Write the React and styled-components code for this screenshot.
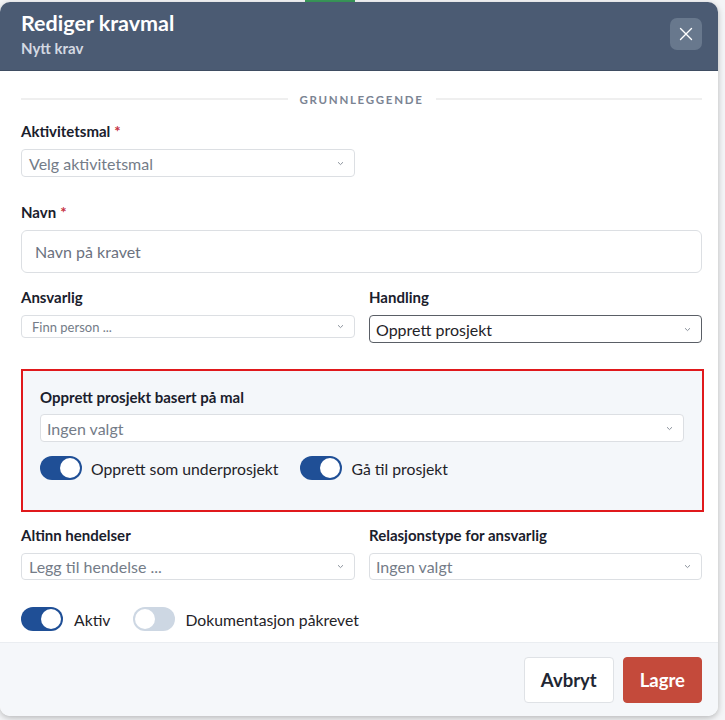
import React from "react";
import styled, { createGlobalStyle } from "styled-components";

const Global = createGlobalStyle`
  html, body { margin: 0; padding: 0; }
  body {
    background: #eef0f3;
    font-family: Lato, "Noto Sans", sans-serif;
    color: #1a202c;
  }
  * { box-sizing: border-box; }
`;

const Page = styled.div`
  width: 725px;
  height: 720px;
  overflow: hidden;
  display: flex;
  flex-direction: column;
  background: #f4f5f7;
`;

const TopStrip = styled.div`
  height: 2px;
  display: flex;
  padding-left: 305px;
`;

const GreenMark = styled.div`
  width: 50px;
  height: 2px;
  background: #3a9a5b;
`;

const Modal = styled.div`
  width: 718px;
  height: 714px;
  background: #fff;
  border-radius: 10px;
  overflow: hidden;
  display: flex;
  flex-direction: column;
  box-shadow: 0 2px 6px rgba(0, 0, 0, 0.25);
`;

const Header = styled.div`
  height: 69px;
  background: #4b5b73;
  display: flex;
  align-items: center;
  justify-content: space-between;
  padding: 0 16px 0 21px;
  border-bottom: 1px solid #3f4d62;
`;

const TitleBlock = styled.div`
  display: flex;
  flex-direction: column;
  gap: 3px;
  margin-top: -3px;
`;

const Title = styled.div`
  color: #fff;
  font-size: 21.5px;
  font-weight: 700;
  line-height: 25px;
`;

const Subtitle = styled.div`
  color: #d3d9e2;
  font-size: 15px;
  font-weight: 700;
  line-height: 19px;
`;

const CloseButton = styled.button`
  width: 32px;
  height: 32px;
  border: none;
  border-radius: 7px;
  background: #68788d;
  display: flex;
  align-items: center;
  justify-content: center;
  padding: 0;
  margin-top: -4px;
`;

const Body = styled.div`
  flex: 1;
  padding: 18px 16px 0 21px;
  display: flex;
  flex-direction: column;
`;

const Divider = styled.div`
  display: flex;
  align-items: center;
  gap: 12px;
  height: 20px;
  margin-bottom: 12px;
  &::before, &::after {
    content: "";
    flex: 1;
    height: 2px;
    background: #efefef;
  }
`;

const DividerText = styled.span`
  font-size: 11.5px;
  font-weight: 700;
  letter-spacing: 1.7px;
  color: #7b8493;
`;

const Group = styled.div`
  display: flex;
  flex-direction: column;
  gap: 8px;
  width: ${(p) => p.$width || "auto"};
  margin-bottom: ${(p) => p.$mb || 0}px;
`;

const Label = styled.div`
  font-size: 15px;
  font-weight: 700;
  line-height: 20px;
  color: #1a202c;
`;

const Req = styled.span`
  color: #c53040;
  margin-left: 4px;
`;

const SelectBox = styled.div`
  height: ${(p) => p.$h || 28}px;
  border: 1px solid ${(p) => (p.$strong ? "#5a5f66" : "#dcdfe3")};
  border-radius: 4px;
  background: #fff;
  display: flex;
  align-items: center;
  justify-content: space-between;
  padding: 0 10px 0 ${(p) => p.$pl || 7}px;
  font-size: ${(p) => p.$fs || 16}px;
  color: ${(p) => (p.$value ? "#1f2328" : "#747c88")};
`;

const TextInput = styled.div`
  height: 43px;
  border: 1px solid #dcdfe3;
  border-radius: 6px;
  display: flex;
  align-items: center;
  padding: 0 13px;
  font-size: 16px;
  color: #6b7280;
`;

const Row = styled.div`
  display: grid;
  grid-template-columns: 334px 333px;
  column-gap: 14px;
  margin-bottom: ${(p) => p.$mb || 0}px;
`;

const Highlight = styled.div`
  border: 2px solid #e0191c;
  background: #f4f7fa;
  padding: 16px 18px 30px 17px;
  display: flex;
  flex-direction: column;
  gap: 7px;
  margin-right: -2px;
  margin-bottom: 13px;
`;

const ToggleRow = styled.div`
  display: flex;
  align-items: center;
  gap: ${(p) => p.$gap || 22}px;
  margin-top: ${(p) => p.$mt || 0}px;
`;

const ToggleItem = styled.label`
  display: flex;
  align-items: center;
  gap: ${(p) => p.$gap || 9}px;
  font-size: 15.75px;
  color: #1f2328;
`;

const Track = styled.span`
  width: 42px;
  height: 24px;
  border-radius: 12px;
  background: ${(p) => (p.$on ? "#1f4f96" : "#cdd7e3")};
  display: flex;
  align-items: center;
  justify-content: ${(p) => (p.$on ? "flex-end" : "flex-start")};
  padding: 2px;
`;

const Knob = styled.span`
  width: 20px;
  height: 20px;
  border-radius: 50%;
  background: #fff;
`;

const Footer = styled.div`
  height: 74px;
  background: #f5f7fa;
  border-top: 1px solid #eaedf1;
  display: flex;
  align-items: center;
  justify-content: flex-end;
  gap: 9px;
  padding: 0 16px 0 0;
`;

const Button = styled.button`
  height: 46px;
  padding: 0 16px;
  border-radius: 4px;
  font-family: inherit;
  font-size: 18.5px;
  font-weight: 700;
  border: 1px solid ${(p) => (p.$primary ? "#c44a3b" : "#dfe2e6")};
  background: ${(p) => (p.$primary ? "#c44a3b" : "#fff")};
  color: ${(p) => (p.$primary ? "#fff" : "#1f2733")};
`;

const Chevron = () => (
  <svg width="7" height="5" viewBox="0 0 7 5" fill="none">
    <path d="M1 1.2 L3.5 3.6 L6 1.2" stroke="#8b929c" strokeWidth="1" />
  </svg>
);

const Select = ({ children, ...rest }) => (
  <SelectBox {...rest}>
    <span>{children}</span>
    <Chevron />
  </SelectBox>
);

const Toggle = ({ on, children, gap }) => (
  <ToggleItem $gap={gap}>
    <Track $on={on}>
      <Knob />
    </Track>
    {children}
  </ToggleItem>
);

export default function App() {
  return (
    <>
      <Global />
      <Page>
        <TopStrip>
          <GreenMark />
        </TopStrip>
        <Modal>
          <Header>
            <TitleBlock>
              <Title>Rediger kravmal</Title>
              <Subtitle>Nytt krav</Subtitle>
            </TitleBlock>
            <CloseButton aria-label="Lukk">
              <svg width="14" height="14" viewBox="0 0 14 14">
                <path d="M1.5 1.5 L12.5 12.5 M12.5 1.5 L1.5 12.5" stroke="#fff" strokeWidth="1.4" strokeLinecap="round" />
              </svg>
            </CloseButton>
          </Header>
          <Body>
            <Divider>
              <DividerText>GRUNNLEGGENDE</DividerText>
            </Divider>
            <Group $width="334px" $mb={25}>
              <Label>
                Aktivitetsmal<Req>*</Req>
              </Label>
              <Select>Velg aktivitetsmal</Select>
            </Group>
            <Group $mb={14}>
              <Label>
                Navn<Req>*</Req>
              </Label>
              <TextInput>Navn på kravet</TextInput>
            </Group>
            <Row $mb={26}>
              <Group>
                <Label>Ansvarlig</Label>
                <Select $h={23} $fs={13} $pl={10}>Finn person ...</Select>
              </Group>
              <Group>
                <Label>Handling</Label>
                <Select $strong $value $pl={6}>Opprett prosjekt</Select>
              </Group>
            </Row>
            <Highlight>
              <Label>Opprett prosjekt basert på mal</Label>
              <Select $pl={6}>Ingen valgt</Select>
              <ToggleRow $mt={7}>
                <Toggle on>Opprett som underprosjekt</Toggle>
                <Toggle on>Gå til prosjekt</Toggle>
              </ToggleRow>
            </Highlight>
            <Row $mb={27}>
              <Group>
                <Label>Altinn hendelser</Label>
                <Select $h={27}>Legg til hendelse ...</Select>
              </Group>
              <Group>
                <Label>Relasjonstype for ansvarlig</Label>
                <Select $h={27} $pl={6}>Ingen valgt</Select>
              </Group>
            </Row>
            <ToggleRow $gap={23}>
              <Toggle on gap={11}>Aktiv</Toggle>
              <Toggle gap={10}>Dokumentasjon påkrevet</Toggle>
            </ToggleRow>
          </Body>
          <Footer>
            <Button>Avbryt</Button>
            <Button $primary>Lagre</Button>
          </Footer>
        </Modal>
      </Page>
    </>
  );
}
